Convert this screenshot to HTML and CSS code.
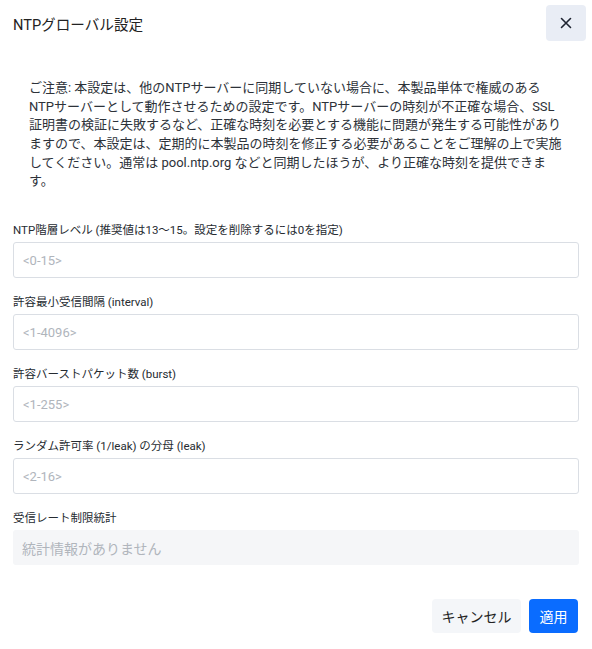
FILE: index.html
```
<!DOCTYPE html>
<html lang="ja">
<head>
<meta charset="utf-8">
<title>NTPグローバル設定</title>
<link rel="stylesheet" href="styles.css">
</head>
<body>
<div class="dialog">
  <div class="header">
    <h1 class="title">NTPグローバル設定</h1>
    <button class="close" type="button" aria-label="閉じる">
      <svg width="12" height="12" viewBox="0 0 12 12"><path d="M1.5 1.5L10.5 10.5M10.5 1.5L1.5 10.5" stroke="#1d2330" stroke-width="1.6" stroke-linecap="round" fill="none"/></svg>
    </button>
  </div>
  <div class="body">
    <p class="notice">ご注意: 本設定は、他のNTPサーバーに同期していない場合に、本製品単体で権威のあるNTPサーバーとして動作させるための設定です。NTPサーバーの時刻が不正確な場合、SSL証明書の検証に失敗するなど、正確な時刻を必要とする機能に問題が発生する可能性がありますので、本設定は、定期的に本製品の時刻を修正する必要があることをご理解の上で実施してください。通常は pool.ntp.org などと同期したほうが、より正確な時刻を提供できます。</p>
    <div class="fields">
      <label class="field">
        <span class="label">NTP階層レベル (推奨値は13～15。設定を削除するには0を指定)</span>
        <input class="input" type="text" placeholder="<0-15>">
      </label>
      <label class="field">
        <span class="label">許容最小受信間隔 (interval)</span>
        <input class="input" type="text" placeholder="<1-4096>">
      </label>
      <label class="field">
        <span class="label">許容バーストパケット数 (burst)</span>
        <input class="input" type="text" placeholder="<1-255>">
      </label>
      <label class="field">
        <span class="label">ランダム許可率 (1/leak) の分母 (leak)</span>
        <input class="input" type="text" placeholder="<2-16>">
      </label>
      <div class="field">
        <span class="label">受信レート制限統計</span>
        <div class="stats">統計情報がありません</div>
      </div>
    </div>
  </div>
  <div class="footer">
    <button class="btn btn-cancel" type="button">キャンセル</button>
    <button class="btn btn-primary" type="button">適用</button>
  </div>
</div>
</body>
</html>
```
FILE: styles.css
```
* { box-sizing: border-box; }
html, body { margin: 0; padding: 0; background: #fff; }
body {
  font-family: Roboto, "Noto Sans CJK JP", sans-serif;
  color: #2a2f36;
}
.dialog { width: 592px; }
.header {
  display: flex;
  align-items: center;
  justify-content: space-between;
  padding: 5px 6px 0 13px;
}
.title {
  margin: 0;
  font-size: 14.6px;
  font-weight: 400;
  color: #222;
}
.close {
  width: 40px;
  height: 36px;
  border: 0;
  border-radius: 4px;
  background: #e9edf5;
  display: flex;
  align-items: center;
  justify-content: center;
  padding: 0;
}
.body { padding: 0 13px; }
.notice {
  margin: 38px 0 0;
  padding: 0 16px;
  font-size: 13px;
  line-height: 18.67px;
  color: #2d3239;
}
.fields {
  margin-top: 31px;
  display: flex;
  flex-direction: column;
  gap: 16px;
}
.field { display: flex; flex-direction: column; gap: 4px; }
.label {
  font-size: 11.5px;
  line-height: 16px;
  color: #262b31;
}
.input {
  height: 36px;
  width: 100%;
  border: 1px solid #dadee4;
  border-radius: 3px;
  padding: 0 9px;
  font: inherit;
  font-size: 13px;
  color: #222;
  background: #fff;
}
.input::placeholder { color: #b0b5bc; }
.stats {
  height: 35px;
  border-radius: 3px;
  background: #f5f6f8;
  padding: 0 9px;
  display: flex;
  align-items: center;
  font-size: 14px;
  color: #b0b5bc;
}
.footer {
  display: flex;
  justify-content: flex-end;
  gap: 8px;
  padding: 34px 14px 0 0;
}
.btn {
  height: 34px;
  border: 0;
  border-radius: 4px;
  font-family: Roboto, "Noto Sans CJK JP", sans-serif;
  font-size: 14px;
  padding: 0;
  white-space: nowrap;
}
.btn-cancel { background: #f4f6f9; color: #222; width: 89px; }
.btn-primary { background: #0a6cff; color: #fff; width: 49px; }
```
